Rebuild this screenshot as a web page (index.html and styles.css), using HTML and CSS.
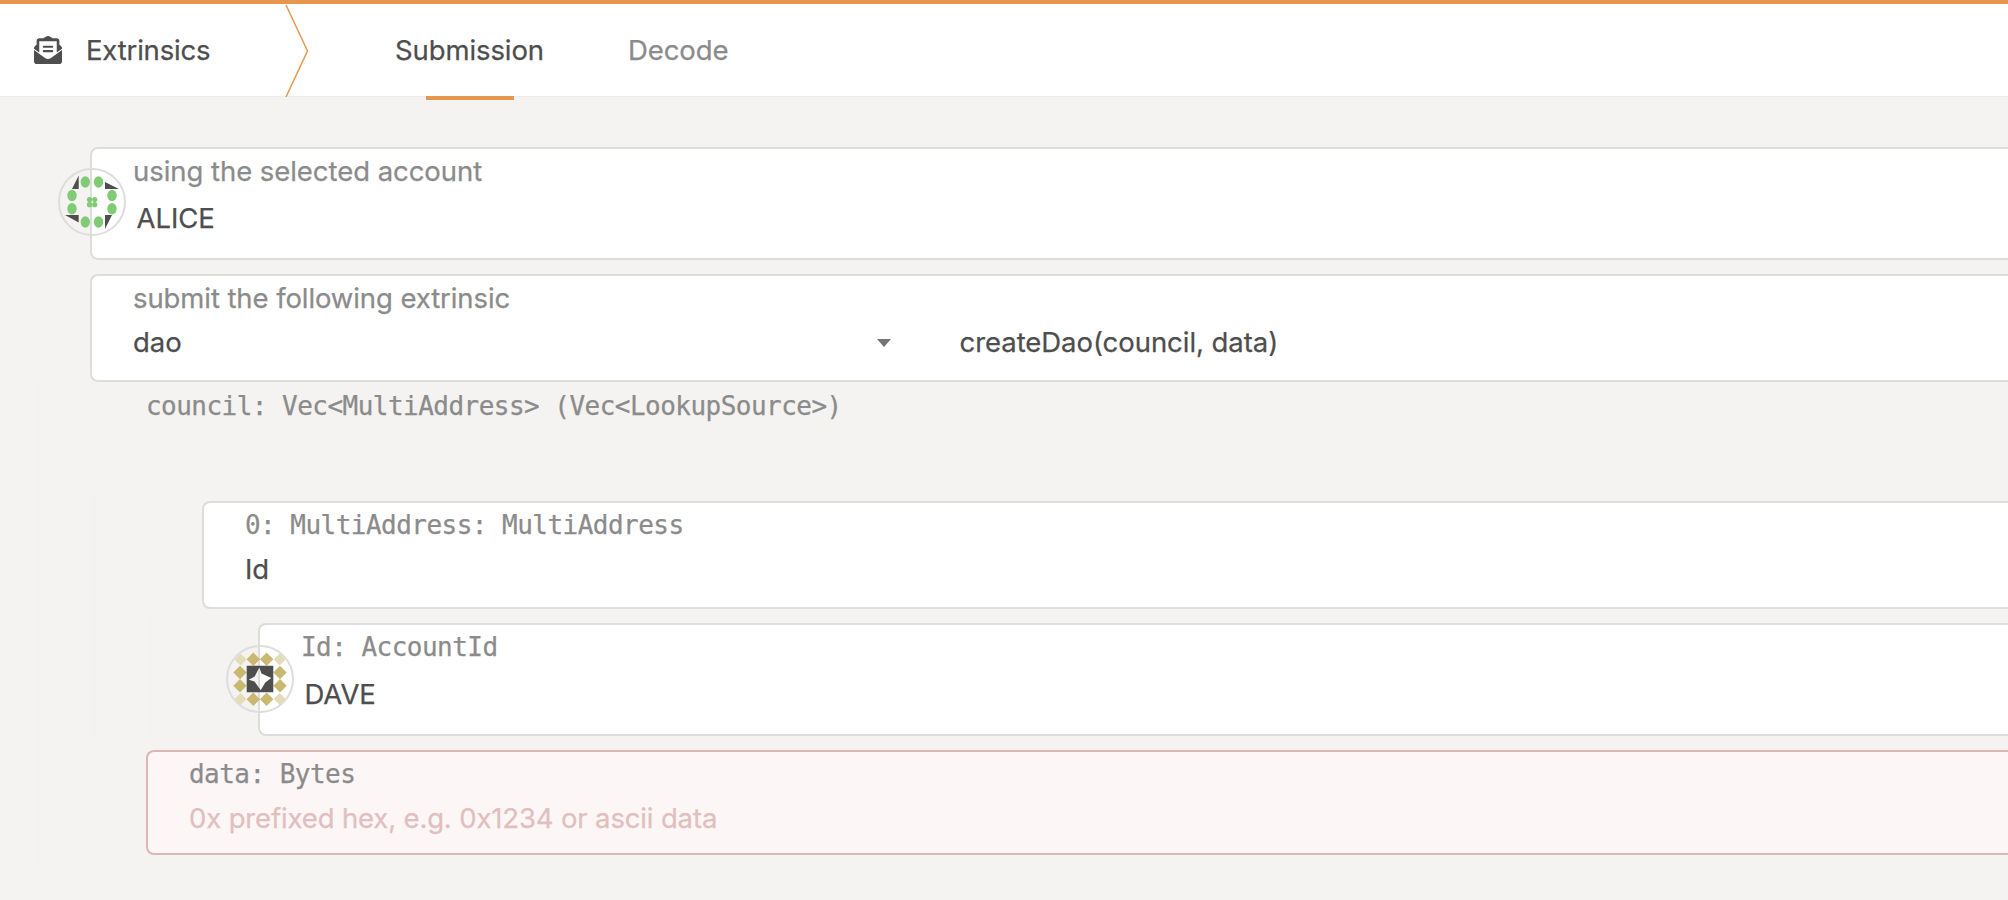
FILE: index.html
```
<!DOCTYPE html>
<html lang="en">
<head>
<meta charset="utf-8">
<title>Extrinsics</title>
<link rel="stylesheet" href="styles.css">
</head>
<body>
<header class="tabs">
  <div class="section">
    <svg class="section-icon" viewBox="0 0 512 512" aria-hidden="true"><path d="M176 216h160c9 0 16-7 16-16v-8c0-9-7-16-16-16H176c-9 0-16 7-16 16v8c0 9 7 16 16 16zm-16 64c0 9 7 16 16 16h160c9 0 16-7 16-16v-8c0-9-7-16-16-16H176c-9 0-16 7-16 16v8zm96 141c-16 0-33-5-47-15L0 255v209c0 27 21 48 48 48h416c27 0 48-21 48-48V255L303 406c-14 10-31 15-47 15zm237-237c-9-7-17-13-29-23V88c0-27-21-48-48-48h-78l-11-8C312 22 279 0 256 0s-56 22-71 32l-11 8H96c-27 0-48 21-48 48v73c-12 10-20 16-29 23-12 9-19 23-19 38v10l96 69V96h320v205l96-69v-10c0-15-7-29-19-38z"/></svg>
    <h1 class="section-title">Extrinsics</h1>
  </div>
  <svg class="chevron" viewBox="0 0 24 94" aria-hidden="true"><path d="M1 1 22.500 47 1 93"/></svg>
  <nav class="tab-list">
    <a class="tab tab-active">Submission</a>
    <a class="tab">Decode</a>
  </nav>
</header>
<main class="content">
  <section class="field field-account">
    <svg class="identicon" viewBox="0 0 68 68" aria-hidden="true">
      <circle class="ring" cx="34" cy="34" r="33"/>
      <g class="dark"><path d="M14 21 20.700 7.500V21zM47 14 61 21H47zM7 47H20.700V54.500zM47 47H54L47 61z"/></g>
      <g class="green"><ellipse cx="27.300" cy="14" rx="4.700" ry="5.700"/><ellipse cx="40.500" cy="14" rx="4.700" ry="5.700"/><ellipse cx="14" cy="27.500" rx="4.700" ry="5.700"/><ellipse cx="54" cy="27.500" rx="4.700" ry="5.700"/><ellipse cx="14" cy="40.700" rx="4.700" ry="5.700"/><ellipse cx="54" cy="40.700" rx="4.700" ry="5.700"/><ellipse cx="27.300" cy="54" rx="4.700" ry="5.700"/><ellipse cx="40.500" cy="54" rx="4.700" ry="5.700"/><circle cx="31.500" cy="31.500" r="2.600"/><circle cx="36.700" cy="31.500" r="2.600"/><circle cx="31.500" cy="36.700" r="2.600"/><circle cx="36.700" cy="36.700" r="2.600"/></g>
    </svg>
    <div class="label">using the selected account</div>
    <div class="value">ALICE</div>
  </section>
  <section class="field field-method">
    <div class="label label-method">submit the following extrinsic</div>
    <div class="method">
      <div class="value method-section">dao<i class="caret"></i></div>
      <div class="value">createDao(council, data)</div>
    </div>
  </section>
  <div class="params params-root">
    <div class="label mono council">council: Vec&lt;MultiAddress&gt; (Vec&lt;LookupSource&gt;)</div>
    <div class="params params-vec">
      <section class="field field-enum">
        <div class="label mono">0: MultiAddress: MultiAddress</div>
        <div class="value">Id</div>
      </section>
      <div class="params params-enum">
        <section class="field field-account">
          <svg class="identicon identicon-low" viewBox="0 0 68 68" aria-hidden="true">
            <circle class="ring" cx="34" cy="34" r="33"/>
            <path class="gold" d="M27.300 7.500 34 14.200l-6.700 6.700-6.700-6.700zM40.600 7.500l6.700 6.700-6.700 6.700-6.700-6.700zM27.300 47.500l6.700 6.700-6.700 6.700-6.700-6.700zM40.600 47.500l6.700 6.700-6.700 6.700-6.700-6.700zM14 20.800l6.700 6.700-6.700 6.700-6.700-6.700zM14 34.100l6.700 6.700-6.700 6.700-6.700-6.700zM54 20.800l6.700 6.700-6.700 6.700-6.700-6.700zM54 34.100l6.700 6.700-6.700 6.700-6.700-6.700z"/>
            <path class="pale" d="M14.500 8.500l6 6-6 6-6-6zM53.700 8.500l6 6-6 6-6-6zM14.500 48l6 6-6 6-6-6zM53.700 48l6 6-6 6-6-6z"/>
            <path class="dark" fill-rule="evenodd" d="M20.700 20.700H47.300V47.300H20.700zM33.300 22.500 28.700 31.500 22.800 34.700 28.500 36.500 34.700 45.300 39.300 37.500 45.300 33 35.500 28.500z"/>
          </svg>
          <div class="label mono">Id: AccountId</div>
          <div class="value">DAVE</div>
        </section>
      </div>
    </div>
    <section class="field field-error">
      <div class="label mono">data: Bytes</div>
      <div class="value placeholder">0x prefixed hex, e.g. 0x1234 or ascii data</div>
    </section>
  </div>
</main>
</body>
</html>
```
FILE: styles.css
```
* { box-sizing: border-box; }
body {
  margin: 0;
  height: 900px;
  overflow: hidden;
  background: #f4f3f1;
  color: #4e4e4e;
  font: 27.5px/40px Inter, "Liberation Sans", sans-serif;
  letter-spacing: -0.05px;
  -webkit-text-stroke: 0.25px currentColor;
}
.tabs {
  display: flex;
  height: 97px;
  border-top: 4px solid #e6974b;
  border-bottom: 1px solid #eeedec;
  background: #fff;
}
.section { display: flex; align-items: center; width: 285px; padding-left: 34px; gap: 24px; }
.section-icon { width: 28px; height: 28px; fill: #4e4e4e; }
.section-title { margin: 0; font: inherit; letter-spacing: -0.18px; }
.chevron { width: 24px; height: 94px; fill: none; stroke: #e6974b; stroke-width: 1.5; }
.tab-list { display: flex; margin-left: 86px; gap: 84px; }
.tab { position: relative; display: flex; align-items: center; letter-spacing: -0.1px; color: #8b8b8b; }
.tab-active { width: 149px; color: #4e4e4e; }
.tab-active::after {
  content: "";
  position: absolute;
  left: 31px;
  bottom: -4px;
  width: 88px;
  height: 4px;
  background: #e6974b;
}
.content { padding-top: 50px; }
.field {
  position: relative;
  height: 108px;
  margin-left: 90px;
  padding: 2px 0 0 41px;
  border: 2px solid #dddddc;
  border-right: 0;
  border-radius: 8px 0 0 8px;
  background: #fff;
}
.field-account { height: 113px; }
.field-account .value { margin-top: 7px; padding-left: 3.500px; }
.field-method { margin-top: 14px; }
.label { height: 40px; color: #8b8b8b; }
.label-method { letter-spacing: -0.09px; }
.value { margin-top: 4px; height: 40px; white-space: nowrap; }
.mono { font: 26px/40px "DejaVu Sans Mono", monospace; letter-spacing: -0.53px; }
.identicon { position: absolute; left: -34px; top: 19px; width: 68px; height: 68px; }
.identicon-low { top: 20px; }
.ring { fill: none; stroke: #dddddc; stroke-width: 2; }
.dark { fill: #4e4e4e; }
.green { fill: #81cb75; }
.gold { fill: #c9b871; }
.pale { fill: #e4dcb7; }
.method { display: flex; }
.method-section { display: flex; align-items: center; justify-content: space-between; width: 758px; margin-right: 68.500px; }
.caret { margin-top: 2px; border: 7px solid transparent; border-top: 8px solid #747474; border-bottom: 0; }
.params { border-left: 6px solid #f2f2f2; }
.params-root { height: 475px; margin: 5px 0 0 35px; }
.council { height: 107px; padding-left: 105px; line-height: 38px; }
.params-vec { height: 242px; margin-left: 49px; padding-top: 7px; }
.field-enum { margin-left: 106px; }
.params-enum { margin: 6px 0 0 51px; padding-top: 8px; }
.params-enum .field { margin-left: 105px; }
.field-error { height: 105px; margin: 14px 0 0 105px; background: #fdf6f6; border-color: #deb5b5; }
.placeholder { letter-spacing: -0.15px; color: #e0bfbe; }
```
